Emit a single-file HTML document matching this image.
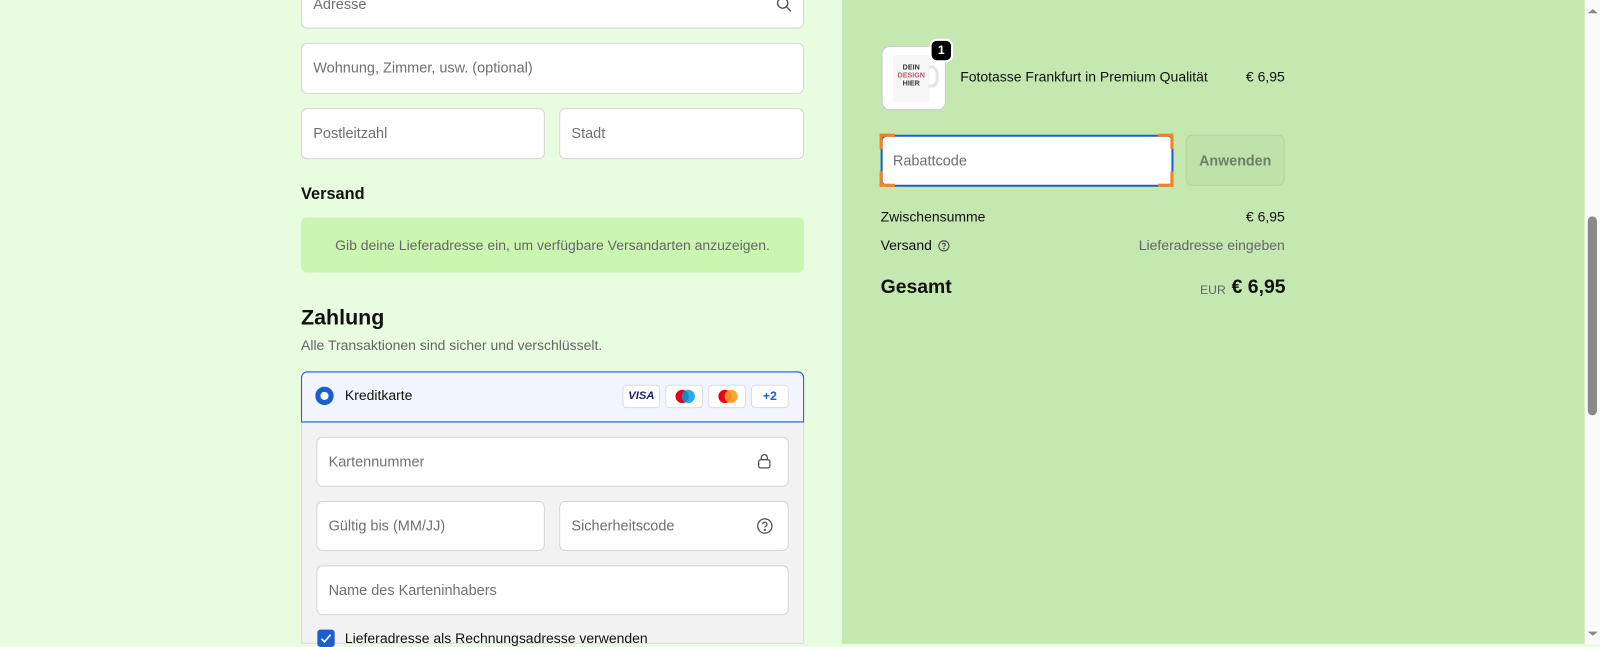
<!DOCTYPE html>
<html><head><meta charset="utf-8"><style>
*{box-sizing:border-box;margin:0;padding:0}
html,body{width:1600px;height:644px;overflow:hidden;background:#e8fce0;font-family:"Liberation Sans",Arial,sans-serif}
#w{position:absolute;left:0;top:0;width:1568px;height:631px;transform:scale(1.02041);transform-origin:0 0}
.a{position:absolute}
.f{position:absolute;background:#fff;border:1px solid #d6d6d6;border-radius:6px;font-size:14.2px;color:#707070;padding-left:11px;display:flex;align-items:center}
.r{background:#c5e7b0}
.t{font-size:13.7px;color:#111}
.c{position:absolute;top:377px;width:37px;height:23px;background:#fff;border:1px solid #ddd;border-radius:4px}
</style></head><body><div id="w">
<div class="a r" style="left:825px;top:0;width:728px;height:631px"></div>
<div class="a" style="left:1553px;top:0;width:15px;height:631px;background:#fafafa"></div>
<div class="a" style="left:1556px;top:212px;width:9px;height:195px;background:#8a8a8a;border-radius:5px"></div>
<div class="a" style="left:1556px;top:5px;border:4px solid transparent;border-bottom:4px solid #888;border-left-width:5px;border-right-width:5px"></div>
<div class="a" style="left:1556px;top:619px;border:4px solid transparent;border-top:4px solid #888;border-left-width:5px;border-right-width:5px"></div>

<div class="f" style="left:295px;top:-22px;width:493px;height:50px;padding-top:4px">Adresse</div>
<svg class="a" style="left:760px;top:-4px" width="16" height="16" viewBox="0 0 16 16" fill="none" stroke="#555" stroke-width="1.4"><circle cx="7" cy="7" r="5"/><path d="M11 11l4 4"/></svg>
<div class="f" style="left:295px;top:42px;width:493px;height:50px">Wohnung, Zimmer, usw. (optional)</div>
<div class="f" style="left:295px;top:106px;width:239px;height:50px">Postleitzahl</div>
<div class="f" style="left:548px;top:106px;width:240px;height:50px">Stadt</div>
<div class="a" style="left:295px;top:182px;font-size:16px;font-weight:bold;color:#111">Versand</div>
<div class="a" style="left:295px;top:213px;width:493px;height:54px;background:#cbf6b2;border-radius:6px;font-size:13.7px;color:#666;display:flex;align-items:center;justify-content:center">Gib deine Lieferadresse ein, um verfügbare Versandarten anzuzeigen.</div>
<div class="a" style="left:295px;top:300px;font-size:21px;font-weight:bold;color:#111">Zahlung</div>
<div class="a" style="left:295px;top:331px;font-size:13.7px;color:#666">Alle Transaktionen sind sicher und verschlüsselt.</div>
<div class="a" style="left:295px;top:364px;width:493px;height:267px;background:#f2f2f2;border:1px solid #ddd;border-radius:6px 6px 0 0"></div>
<div class="a" style="left:295px;top:364px;width:493px;height:50px;background:#f3f5fe;border:1px solid #1a5fd0;border-radius:6px 6px 0 0"></div>
<div class="a" style="left:309px;top:379px;width:18px;height:18px;border-radius:50%;border:5.5px solid #1a5fd0;background:#fff"></div>
<div class="a t" style="left:338px;top:380px">Kreditkarte</div>
<div class="c" style="left:610px;font:italic bold 11px 'Liberation Sans';color:#1a1f71;text-align:center;line-height:21px">VISA</div>
<div class="c" style="left:652px"><span class="a" style="left:9px;top:4px;width:13px;height:13px;border-radius:50%;background:#e3001b"></span><span class="a" style="left:15px;top:4px;width:13px;height:13px;border-radius:50%;background:#009ee3;opacity:.85"></span></div>
<div class="c" style="left:694px"><span class="a" style="left:9px;top:4px;width:13px;height:13px;border-radius:50%;background:#eb001b"></span><span class="a" style="left:15px;top:4px;width:13px;height:13px;border-radius:50%;background:#f79e1b;opacity:.9"></span></div>
<div class="c" style="left:736px;font-size:12px;font-weight:bold;color:#1a5fd0;text-align:center;line-height:21px">+2</div>
<div class="f" style="left:310px;top:428px;width:463px;height:49px">Kartennummer</div>
<svg class="a" style="left:742px;top:444px" width="14" height="16" viewBox="0 0 14 16" fill="none" stroke="#555" stroke-width="1.3"><rect x="1.5" y="6.5" width="11" height="8" rx="2"/><path d="M4 6.5V4.5a3 3 0 016 0v2"/></svg>
<div class="f" style="left:310px;top:491px;width:224px;height:49px">Gültig bis (MM/JJ)</div>
<div class="f" style="left:548px;top:491px;width:225px;height:49px">Sicherheitscode</div>
<svg class="a" style="left:741px;top:507px" width="17" height="17" viewBox="0 0 17 17" fill="none" stroke="#555" stroke-width="1.3"><circle cx="8.5" cy="8.5" r="7"/><path d="M6.5 6.8a2 2 0 113 1.7c-.7.4-1 .8-1 1.5"/><circle cx="8.5" cy="12.3" r=".5" fill="#555"/></svg>
<div class="f" style="left:310px;top:554px;width:463px;height:49px">Name des Karteninhabers</div>
<div class="a" style="left:311px;top:617px;width:17px;height:17px;background:#1a5fd0;border-radius:3px"></div>
<svg class="a" style="left:313px;top:620px" width="13" height="11" viewBox="0 0 13 11" fill="none" stroke="#fff" stroke-width="1.6"><path d="M2 6l3 3 6-7"/></svg>
<div class="a t" style="left:338px;top:618px">Lieferadresse als Rechnungsadresse verwenden</div>

<div class="a" style="left:864px;top:45px;width:63px;height:63px;background:#fff;border:1px solid #ccc;border-radius:8px;overflow:hidden">
<div class="a" style="left:10px;top:8px;width:36px;height:46px;background:#f6f6f6;border-radius:2px;font:bold 7px 'Liberation Sans';text-align:center;line-height:8px;padding-top:9px;color:#333">DEIN<br><span style="color:#c05a70">DESIGN</span><br>HIER</div>
<div class="a" style="left:45px;top:18px;width:10px;height:22px;border:3px solid #e5e5e5;border-left:none;border-radius:0 8px 8px 0"></div></div>
<div class="a" style="left:911px;top:38px;width:23px;height:23px;background:#000;border:2px solid #fff;border-radius:7px;color:#fff;font-size:12px;font-weight:bold;text-align:center;line-height:19px">1</div>
<div class="a t" style="left:941px;top:68px">Fototasse Frankfurt in Premium Qualität</div>
<div class="a t" style="left:1221px;top:68px">€ 6,95</div>
<div class="a" style="left:863px;top:132px;width:287px;height:51px;background:#fff;border:2px solid #1a5fd0;border-radius:6px;font-size:14.2px;color:#707070;padding:16px 10px">Rabattcode</div>
<div class="a" style="left:862px;top:131px;width:15px;height:3px;background:#f58220"></div><div class="a" style="left:862px;top:131px;width:3px;height:15px;background:#f58220"></div>
<div class="a" style="left:1135px;top:131px;width:15px;height:3px;background:#f58220"></div><div class="a" style="left:1147px;top:131px;width:3px;height:15px;background:#f58220"></div>
<div class="a" style="left:862px;top:180px;width:15px;height:3px;background:#f58220"></div><div class="a" style="left:862px;top:168px;width:3px;height:15px;background:#f58220"></div>
<div class="a" style="left:1135px;top:180px;width:15px;height:3px;background:#f58220"></div><div class="a" style="left:1147px;top:168px;width:3px;height:15px;background:#f58220"></div>
<div class="a" style="left:1162px;top:132px;width:97px;height:50px;background:#bfe1aa;border:1px solid #b2d69d;border-radius:6px;font-size:14px;font-weight:bold;color:#6c7f64;text-align:center;line-height:48px">Anwenden</div>
<div class="a t" style="left:863px;top:205px">Zwischensumme</div>
<div class="a t" style="left:1221px;top:205px">€ 6,95</div>
<div class="a t" style="left:863px;top:233px">Versand</div>
<svg class="a" style="left:919px;top:235px" width="12" height="12" viewBox="0 0 12 12" fill="none" stroke="#444" stroke-width="1"><circle cx="6" cy="6" r="5"/><path d="M4.6 4.8a1.4 1.4 0 112 1.2c-.5.3-.6.5-.6 1"/><circle cx="6" cy="8.6" r=".3"/></svg>
<div class="a" style="left:1116px;top:233px;font-size:13.7px;color:#666">Lieferadresse eingeben</div>
<div class="a" style="left:863px;top:271px;font-size:19px;font-weight:bold;color:#111">Gesamt</div>
<div class="a" style="left:1176px;top:277px;font-size:12px;color:#666">EUR</div>
<div class="a" style="left:1207px;top:271px;font-size:19px;font-weight:bold;color:#111">€ 6,95</div>
</div></body></html>
